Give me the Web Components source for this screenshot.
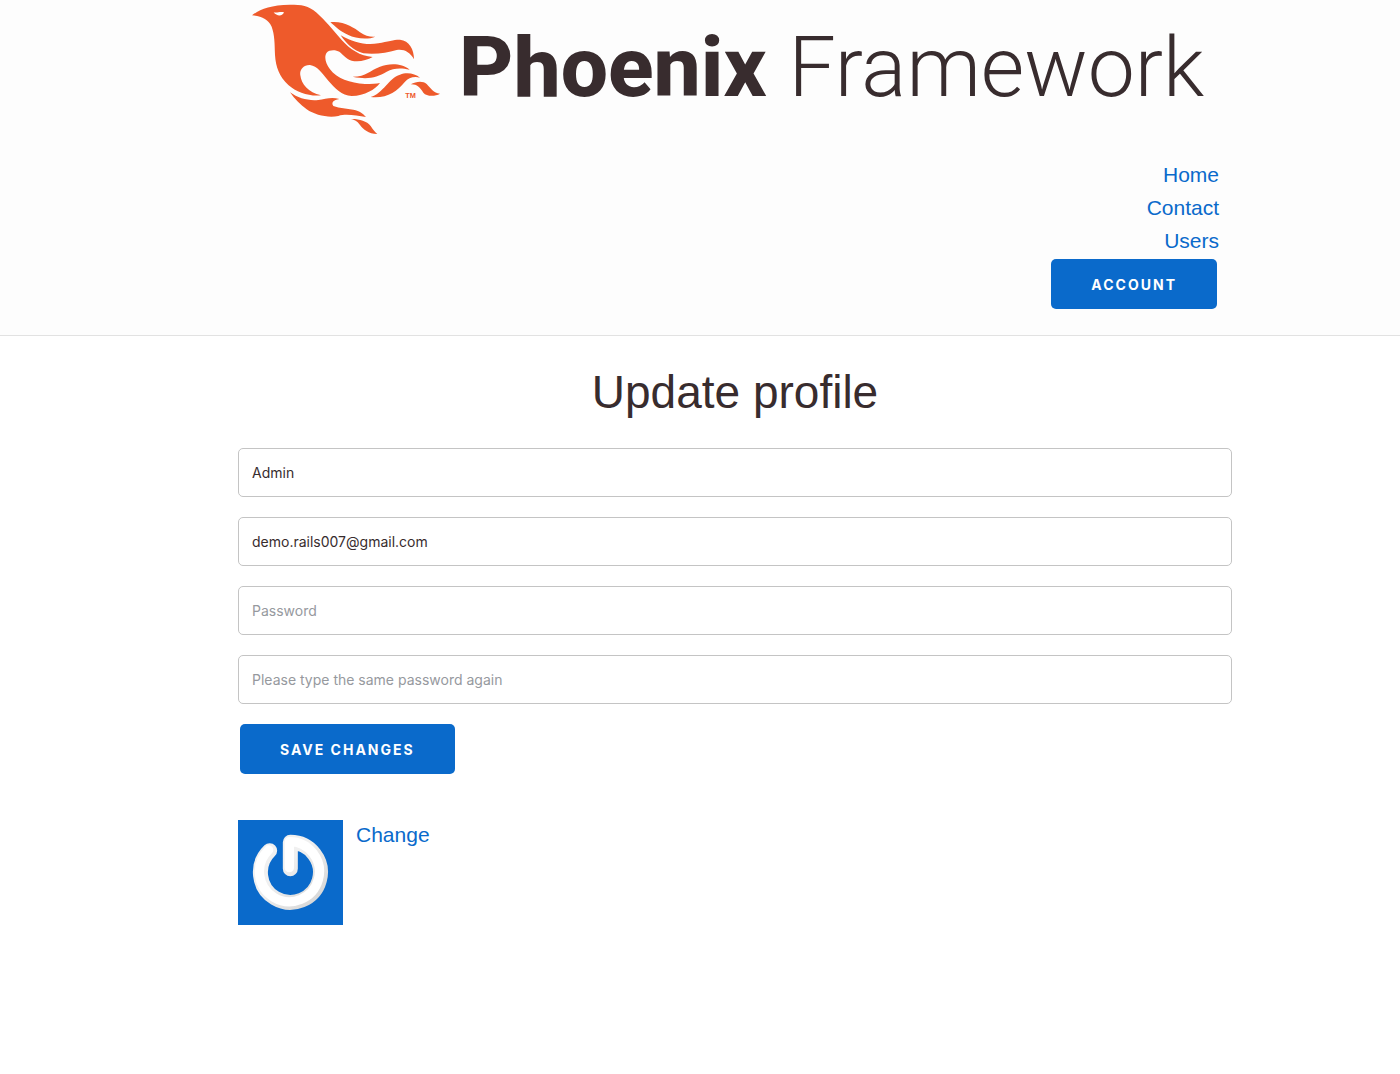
<!DOCTYPE html>
<html lang="en">
<head>
<meta charset="utf-8">
<title>Update profile</title>
<style>
  :root {
    --blue: #0a6acb;
    --ink: #382c2e;
    --line: #c4c4c4;
    --ui: Inter, "Noto Sans", sans-serif;
  }
  body {
    margin: 0;
    background: #fff;
    color: var(--ink);
    font: 21px/33px "Liberation Sans", Arial, sans-serif;
  }
</style>
</head>
<body>
<profile-page></profile-page>
<script>
const define = (name, html, setup) => {
  customElements.define(name, class extends HTMLElement {
    constructor() {
      super();
      this.attachShadow({ mode: "open" }).innerHTML = html;
    }
    connectedCallback() { if (setup) setup(this, this.shadowRoot); }
  });
};

define("phoenix-bird", `
  <style>:host { display: block; width: 190px; flex: none; } svg { display: block; width: 100%; }</style>
  <svg viewBox="33 0 570 420" fill="#ee5a2b" aria-hidden="true">
    <path d="M36 46C60 28 90 15 150 14C185 14 205 16 230 38C255 60 280 90 305 120C330 148 360 168 398 171C380 182 355 186 335 182C318 176 308 163 298 155C288 149 268 148 260 158C252 170 256 190 270 208C290 235 330 250 375 252C395 252 410 251 420 249C405 268 375 288 335 288C305 286 285 265 265 242C245 218 232 198 210 195C190 194 178 210 181 226C184 252 205 278 243 286C210 290 170 278 145 255C118 230 107 200 105 165C104 130 104 105 95 80C85 58 65 48 36 46Z"/>
    <path fill="#fff" d="M101 37C112 40 120 33 132 37C129 49 110 50 101 37Z"/>
    <path d="M271 67C310 62 345 85 360 97C375 108 390 111 406 110C385 120 345 116 325 105C300 95 285 78 271 67Z"/>
    <path d="M302 106C340 128 380 137 415 130C445 124 465 118 480 119C508 122 522 148 522 178C510 155 490 146 470 150C440 158 410 164 370 160C340 152 318 130 302 106Z"/>
    <path d="M338 230C380 230 390 210 420 200C445 190 485 188 509 209C480 203 460 205 440 215C410 232 385 240 338 230Z"/>
    <path d="M392 291C430 280 445 235 480 224C500 216 525 220 540 233C520 228 505 235 495 245C470 275 440 296 392 291Z"/>
    <path d="M512 253C530 243 550 243 560 252C573 265 580 280 600 281C585 290 560 290 550 278C540 262 530 252 512 253Z"/>
    <path d="M150 277C175 295 205 303 235 300C255 297 275 290 298 297C280 300 273 308 280 318C300 326 320 325 340 329C360 333 370 342 378 351C350 348 320 340 295 348C265 354 225 346 200 328C180 314 165 298 150 277Z"/>
    <path d="M332 357C355 356 380 362 392 378C400 390 405 397 412 402C385 402 370 388 360 375C350 362 345 360 332 357Z"/>
    <text x="496" y="293" font-family="Liberation Sans, sans-serif" font-weight="700" font-size="22">TM</text>
  </svg>`);

define("brand-logo", `
  <style>
    :host { display: flex; gap: 18px; }
    .word { display: flex; gap: 22px; font: 84px/136px Roboto, sans-serif; white-space: nowrap; }
    b { font-weight: 800; }
    span { font-weight: 300; }
  </style>
  <phoenix-bird></phoenix-bird>
  <div class="word"><b>Phoenix</b><span>Framework</span></div>`);

define("text-link", `
  <style>:host { display: block; } a { color: var(--blue); text-decoration: none; }</style>
  <a href="#"><slot></slot></a>`);

define("push-button", `
  <style>
    :host { display: block; margin: 0 2px; }
    button {
      display: block; height: 50px; padding: 2px 40px 0; border: 0; border-radius: 5px;
      background: var(--blue); color: #fff; font: 700 14px/48px var(--ui);
      letter-spacing: 2px; text-transform: uppercase; cursor: pointer;
    }
  </style>
  <button type="button"><slot></slot></button>`);

define("site-header", `
  <style>
    :host { display: block; background: #fdfdfd; border-bottom: 1px solid #e2e2e2; }
    header { margin: 0 12% 0 17%; padding: 0 13px 26px; }
    nav { padding-top: 18px; }
    .links { padding-bottom: 2px; text-align: right; }
    .action { display: flex; justify-content: flex-end; }
  </style>
  <header>
    <brand-logo></brand-logo>
    <nav>
      <div class="links">
        <text-link>Home</text-link>
        <text-link>Contact</text-link>
        <text-link>Users</text-link>
      </div>
      <div class="action"><push-button>Account</push-button></div>
    </nav>
  </header>`);

define("form-field", `
  <style>
    :host { display: block; }
    input {
      display: block; box-sizing: border-box; width: 100%; height: 49px; padding: 0 13px;
      border: 1px solid var(--line); border-radius: 5px; background: #fff;
      color: var(--ink); font: 14px/20px var(--ui); outline: 0;
    }
    input::placeholder { color: #96999e; opacity: 1; }
  </style>
  <input>`, (host, root) => {
    const input = root.querySelector("input");
    input.type = host.getAttribute("type");
    input.setAttribute("aria-label", host.getAttribute("label"));
    input.placeholder = host.getAttribute("label");
    input.value = host.getAttribute("value") || "";
  });

define("user-avatar", `
  <style>:host { display: block; width: 105px; flex: none; } svg { display: block; width: 100%; background: var(--blue); }</style>
  <svg viewBox="24 30 315 315" fill="none" stroke-linecap="round" stroke-linejoin="round" role="img" aria-label="Avatar">
    <defs><linearGradient id="g" x1="0" y1="0" x2="1" y2="1">
      <stop offset=".4" stop-color="#f0f0f0"/><stop offset="1" stop-color="#d6d6d6"/>
    </linearGradient></defs>
    <path stroke="url(#g)" stroke-width="45" d="M119 122A90 90 0 1 0 181 97V176"/>
    <path stroke="#fff" stroke-width="28" d="M116 120A90 90 0 1 0 178 95V173"/>
  </svg>`);

define("profile-page", `
  <style>
    :host { display: block; }
    main { margin: 0 12% 0 17%; }
    h1 { margin: 0; padding: 28px 0 28px; font-size: 46px; line-height: 56px; font-weight: 400; text-align: center; }
    form { display: flex; flex-direction: column; gap: 20px; }
    form push-button { align-self: flex-start; }
    .photo { display: flex; gap: 13px; margin-top: 46px; }
    .photo text-link { line-height: 30px; }
  </style>
  <site-header></site-header>
  <main>
    <h1>Update profile</h1>
    <form>
      <form-field type="text" label="Name" value="Admin"></form-field>
      <form-field type="email" label="Email" value="demo.rails007@gmail.com"></form-field>
      <form-field type="password" label="Password"></form-field>
      <form-field type="password" label="Please type the same password again"></form-field>
      <push-button>Save changes</push-button>
    </form>
    <div class="photo">
      <user-avatar></user-avatar>
      <text-link>Change</text-link>
    </div>
  </main>`);
</script>
</body>
</html>
